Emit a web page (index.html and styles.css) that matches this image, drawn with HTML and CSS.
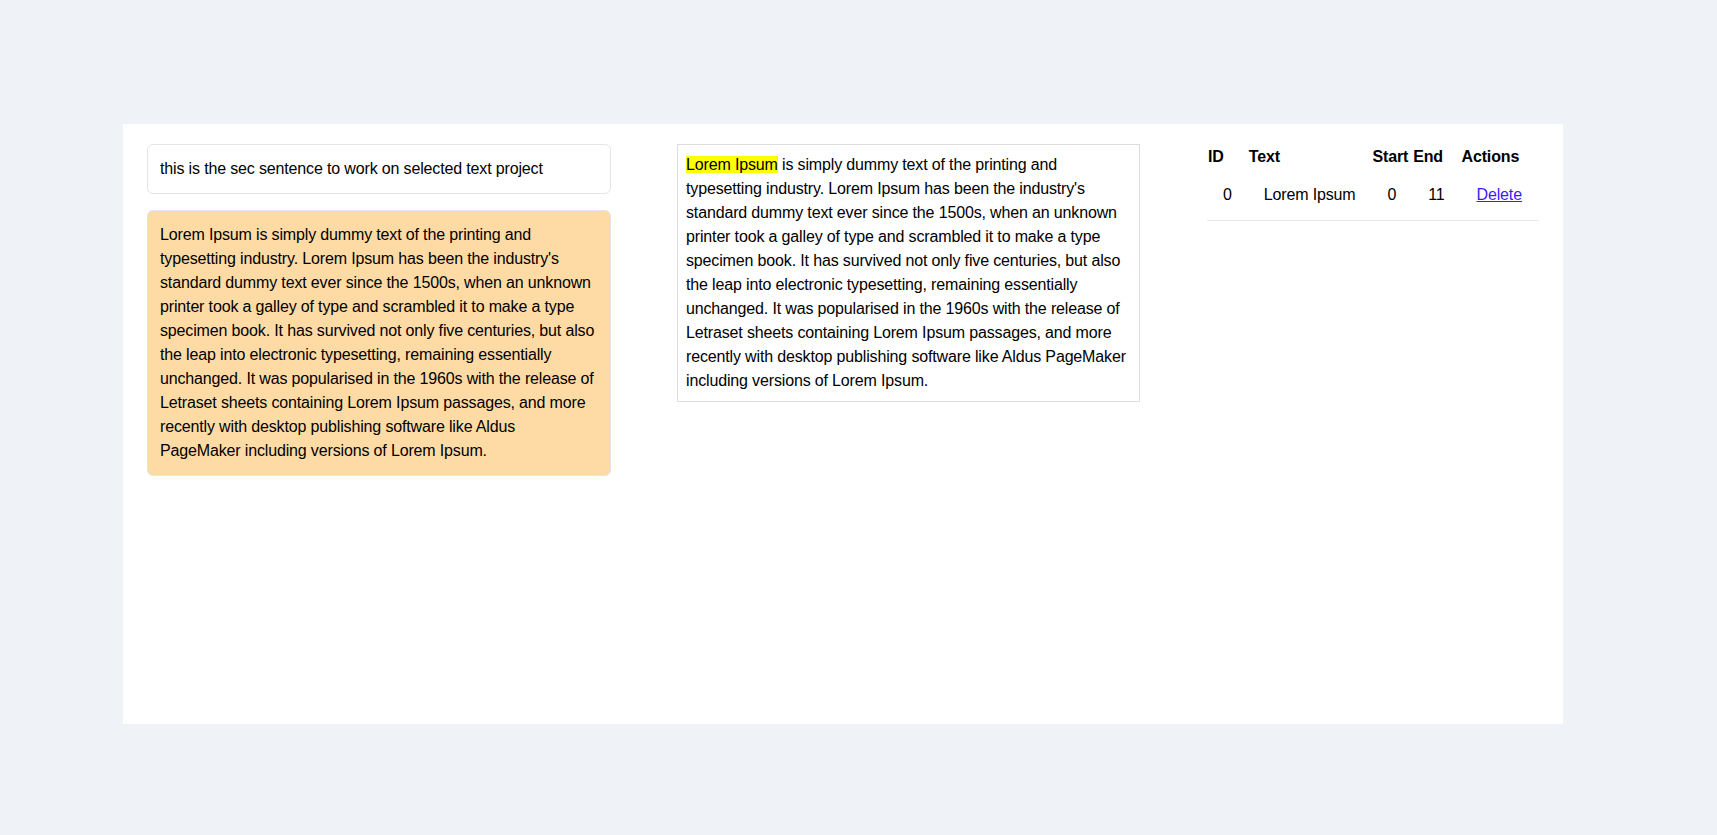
FILE: index.html
```html
<!DOCTYPE html>
<html lang="en">
<head>
<meta charset="utf-8">
<title>Selected text project</title>
<link rel="stylesheet" href="styles.css">
</head>
<body>
<main class="page">
  <section class="panel">
    <div class="col col-left">
      <div class="sentence">this is the sec sentence to work on selected text project</div>
      <div class="source">Lorem Ipsum is simply dummy text of the printing and typesetting industry. Lorem Ipsum has been the industry's standard dummy text ever since the 1500s, when an unknown printer took a galley of type and scrambled it to make a type specimen book. It has survived not only five centuries, but also the leap into electronic typesetting, remaining essentially unchanged. It was popularised in the 1960s with the release of Letraset sheets containing Lorem Ipsum passages, and more recently with desktop publishing software like Aldus PageMaker including versions of Lorem Ipsum.</div>
    </div>
    <div class="col col-mid">
      <div class="preview"><mark class="hl">Lorem Ipsum</mark> is simply dummy text of the printing and typesetting industry. Lorem Ipsum has been the industry's standard dummy text ever since the 1500s, when an unknown printer took a galley of type and scrambled it to make a type specimen book. It has survived not only five centuries, but also the leap into electronic typesetting, remaining essentially unchanged. It was popularised in the 1960s with the release of Letraset sheets containing Lorem Ipsum passages, and more recently with desktop publishing software like Aldus PageMaker including versions of Lorem Ipsum.</div>
    </div>
    <div class="col col-right">
      <table class="sel-table">
        <thead>
          <tr><th>ID</th><th>Text</th><th>Start</th><th>End</th><th>Actions</th></tr>
        </thead>
        <tbody>
          <tr><td>0</td><td>Lorem Ipsum</td><td>0</td><td>11</td><td><a href="#" class="del">Delete</a></td></tr>
        </tbody>
      </table>
    </div>
  </section>
</main>
</body>
</html>
```

FILE: styles.css
```css
html, body {
  margin: 0;
  padding: 0;
}
body {
  background: #eff2f7;
  font-family: "Liberation Sans", Arial, sans-serif;
  font-size: 16px;
  line-height: 24px;
  letter-spacing: -0.15px;
  color: #000;
}
.page {
  padding: 124px 0 0 123px;
}
.panel {
  box-sizing: border-box;
  width: 1440px;
  height: 600px;
  background: #fff;
  padding: 20px 24px;
  display: flex;
  gap: 66px;
  align-items: flex-start;
}
.col-left {
  width: 464px;
  display: flex;
  flex-direction: column;
  gap: 16px;
}
.sentence {
  border: 1px solid #e3e5ea;
  border-radius: 6px;
  padding: 12px;
}
.source {
  background: #fedba5;
  border: 1px solid #e3e5ea;
  border-radius: 6px;
  padding: 12px;
}
.col-mid {
  width: 463px;
}
.col-right {
  margin-left: 1px;
}
.preview {
  border: 1px solid #dcdde0;
  padding: 8px;
}
.hl {
  background: #ffff00;
  color: #000;
}
.sel-table {
  border-collapse: collapse;
}
.sel-table th {
  text-align: left;
  font-weight: bold;
  padding: 1px;
}
.sel-table td {
  padding: 13px 16px;
  border-bottom: 1px solid #e5e7eb;
}
.del {
  color: #3a1cff;
}
```
